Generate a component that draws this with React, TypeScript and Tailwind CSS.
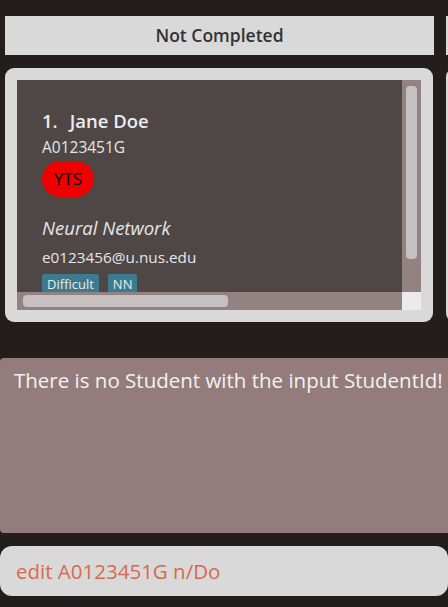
import React from "react";

const font = { fontFamily: '"Open Sans", "Noto Sans", sans-serif' };

const StudentCard = () => (
  <div className="w-[428px] h-[254px] shrink-0 rounded-[9px] bg-[#d9d9d9] p-[12px]">
    <div className="flex h-full flex-col bg-[#928282]">
      <div className="flex min-h-0 flex-1">
        {/* Card content, clipped like a scroll pane */}
        <div className="flex-1 overflow-hidden bg-[#4f4646] pl-[25px] pt-[29px]">
          <div className="flex text-[18.5px] font-semibold leading-[24px] text-[#ececec]">
            <span>1.</span>
            <span className="ml-[12px]">Jane Doe</span>
          </div>
          <div className="mt-[4px] text-[15.5px] leading-[20px] text-[#e6e6e6]">A0123451G</div>
          <div className="mt-[4px] inline-flex h-[36px] items-center rounded-full bg-[#ee0000] px-[12px] text-[17px] text-black">
            YTS
          </div>
          <div className="mt-[19px] text-[18.5px] italic leading-[24px] text-[#e6e6e6]">Neural Network</div>
          <div className="mt-[6px] text-[15.3px] leading-[22px] text-[#e6e6e6]">e0123456@u.nus.edu</div>
          <div className="mt-[6px] flex gap-[9px]">
            <span className="rounded-[2px] bg-[#3d7a90] px-[5px] text-[13px] leading-[20px] text-[#eaeaea]">Difficult</span>
            <span className="rounded-[2px] bg-[#3d7a90] px-[5px] text-[13px] leading-[20px] text-[#eaeaea]">NN</span>
          </div>
        </div>
        {/* vertical scrollbar */}
        <div className="w-[19px] shrink-0 px-[4px] pt-[6px]">
          <div className="h-[173px] rounded-[4px] bg-[#c6c0c0]" />
        </div>
      </div>
      {/* horizontal scrollbar */}
      <div className="flex h-[18px] shrink-0">
        <div className="flex-1 py-[3px] pl-[6px]">
          <div className="h-full w-[205px] rounded-[4px] bg-[#c6c0c0]" />
        </div>
        <div className="w-[19px] bg-[#ebebeb]" />
      </div>
    </div>
  </div>
);

export default function App() {
  return (
    <div className="flex h-[607px] w-[448px] flex-col overflow-hidden bg-[#241d1e]" style={font}>
      {/* columns */}
      <div className="mt-[16px] flex gap-[12px] pl-[5px]">
        <div className="flex w-[429px] shrink-0 flex-col gap-[13px]">
          <div className="flex h-[39px] items-center justify-center bg-[#d9d9d9] text-[17.5px] font-semibold text-[#333]">
            Not Completed
          </div>
          <StudentCard />
        </div>
        <div className="flex w-[429px] shrink-0 flex-col gap-[13px]">
          <div className="h-[39px] bg-[#d9d9d9]" />
          <div className="h-[254px] rounded-[9px] bg-[#d9d9d9]" />
        </div>
      </div>

      {/* result display */}
      <div className="mt-[36px] h-[175px] shrink-0 rounded-l-[4px] bg-[#947c7c] px-[14px] pt-[8px] text-[20.5px] leading-[28px] text-[#f2f2f2] whitespace-nowrap">
        There is no Student with the input StudentId!
      </div>

      {/* command box */}
      <div className="mt-[13px] flex h-[50px] shrink-0 items-center rounded-[12px] bg-[#d9d9d9] px-[16px] text-[20.5px] text-[#d8694f]">
        edit A0123451G n/Do
      </div>
    </div>
  );
}
